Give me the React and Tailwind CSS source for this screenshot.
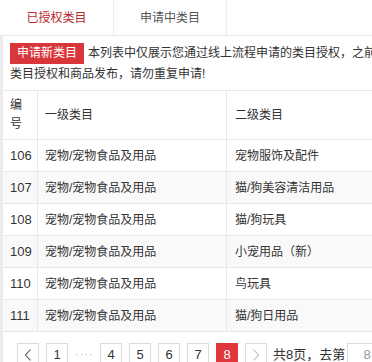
import React from "react";

const rows = [
  ["106", "宠物/宠物食品及用品", "宠物服饰及配件"],
  ["107", "宠物/宠物食品及用品", "猫/狗美容清洁用品"],
  ["108", "宠物/宠物食品及用品", "猫/狗玩具"],
  ["109", "宠物/宠物食品及用品", "小宠用品（新）"],
  ["110", "宠物/宠物食品及用品", "鸟玩具"],
  ["111", "宠物/宠物食品及用品", "猫/狗日用品"],
];

function PageBox({ children, active }) {
  return (
    <div
      className={
        "w-[22px] h-[23px] shrink-0 flex items-center justify-center text-[13px] " +
        (active
          ? "bg-[#e0373c] text-white border border-[#e0373c]"
          : "bg-white text-[#333] border border-[#dcdcdc]")
      }
    >
      {children}
    </div>
  );
}

export default function App() {
  return (
    <div
      className="w-[372px] h-[362px] overflow-hidden bg-white text-[12px] text-[#333]"
      style={{ fontFamily: '"Liberation Sans", "Noto Sans CJK SC", sans-serif' }}
    >
      {/* Tabs */}
      <div className="flex h-[36px] border-b border-[#e6e6e6]">
        <div className="w-[114px] border-r border-[#ececec] flex items-center justify-center text-[#b8282c]">
          已授权类目
        </div>
        <div className="w-[113px] border-r border-[#ececec] flex items-center justify-center text-[#555]">
          申请中类目
        </div>
      </div>

      <div className="flex">
        <div className="w-[3px] shrink-0 bg-[#ececec]" />
        <div className="flex-1 min-w-0 overflow-hidden">
          {/* Intro */}
          <div className="pl-[7px] pt-[7px] leading-[21px] whitespace-nowrap">
            <div>
              <span className="inline-block bg-[#d8363a] text-white px-[7px] h-[21px] leading-[21px] mr-[4px]">
                申请新类目
              </span>
              本列表中仅展示您通过线上流程申请的类目授权，之前
            </div>
            <div>类目授权和商品发布，请勿重复申请!</div>
          </div>

          {/* Table */}
          <div className="mt-[5px] w-[440px] border-t border-[#e8e8e8]">
            <div className="grid grid-cols-[35px_189px_1fr] border-b border-[#e8e8e8]">
              <div className="px-[7px] py-[5px] leading-[19px] border-r border-[#e8e8e8]">
                编号
              </div>
              <div className="px-[7px] flex items-center border-r border-[#e8e8e8]">
                一级类目
              </div>
              <div className="px-[8px] flex items-center">二级类目</div>
            </div>
            {rows.map((r, i) => (
              <div
                key={r[0]}
                className={
                  "grid grid-cols-[35px_189px_1fr] h-[32px] border-b border-[#e8e8e8] " +
                  (i % 2 === 1 ? "bg-[#f9f9f9]" : "bg-white")
                }
              >
                <div className="pl-[7px] flex items-center border-r border-[#e8e8e8] text-[13px]">
                  {r[0]}
                </div>
                <div className="pl-[7px] flex items-center border-r border-[#e8e8e8]">
                  {r[1]}
                </div>
                <div className="pl-[8px] flex items-center">{r[2]}</div>
              </div>
            ))}
          </div>

          {/* Pagination */}
          <div className="flex items-center gap-[7px] pl-[14px] pt-[11px] whitespace-nowrap">
            <PageBox>
              <svg width="10" height="14" viewBox="0 0 10 14" fill="none">
                <path d="M7.5 1.5L2.5 7l5 5.5" stroke="#555" strokeWidth="1.1" />
              </svg>
            </PageBox>
            <PageBox>1</PageBox>
            <span className="w-[18px] text-center text-[#bbb] text-[11px] tracking-[1px]">····</span>
            <PageBox>4</PageBox>
            <PageBox>5</PageBox>
            <PageBox>6</PageBox>
            <PageBox>7</PageBox>
            <PageBox active>8</PageBox>
            <PageBox>
              <svg width="10" height="14" viewBox="0 0 10 14" fill="none">
                <path d="M2.5 1.5L7.5 7l-5 5.5" stroke="#bbb" strokeWidth="1.1" />
              </svg>
            </PageBox>
            <span className="text-[13px] -ml-[1px]">共8页，去第</span>
            <div className="-ml-[5px] w-[40px] h-[23px] shrink-0 border border-[#dcdcdc] bg-white flex items-center justify-center text-[13px] text-[#999]">
              8
            </div>
          </div>
        </div>
      </div>
    </div>
  );
}
